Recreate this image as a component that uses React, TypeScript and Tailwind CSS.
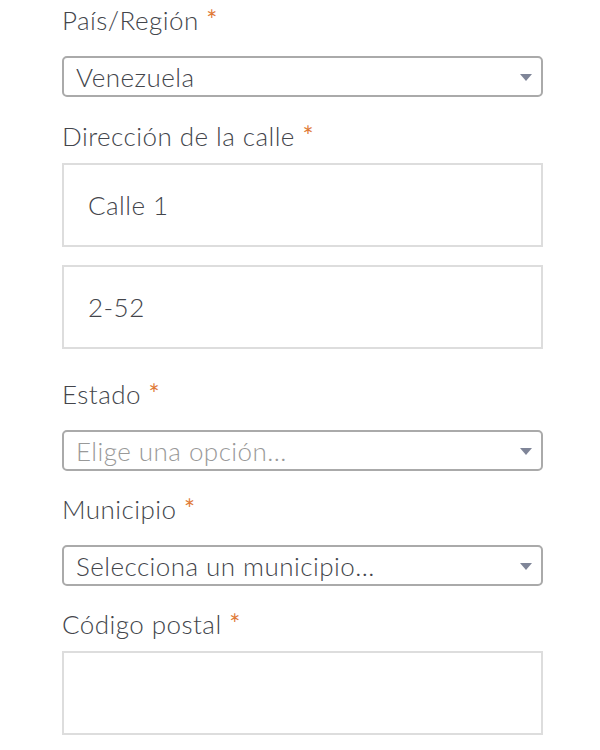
import React from "react";

const font = { fontFamily: "Lato, 'Noto Sans', sans-serif" };

function Label({ text, className = "" }: { text: string; className?: string }) {
  return (
    <div className={`text-[26px] font-light leading-[36px] tracking-[0.45px] text-[#43454b] ${className}`}>
      {text} <span className="font-normal text-[#e07a37]">*</span>
    </div>
  );
}

function Select({ value, placeholder = false, className = "" }: { value: string; placeholder?: boolean; className?: string }) {
  return (
    <div
      className={`flex h-[41px] w-[481px] items-center justify-between rounded-[5px] border-2 border-[#aaaaaa] bg-white pl-[12px] pr-[9px] ${className}`}
    >
      <span className={`text-[26px] font-light leading-[30px] tracking-[0.45px] ${placeholder ? "text-[#999999]" : "text-[#43454b]"}`}>{value}</span>
      <svg width="12" height="7" viewBox="0 0 12 7" className="mt-[2px]">
        <polygon points="0,0 12,0 6,7" fill="#7f8598" />
      </svg>
    </div>
  );
}

function Input({ value = "", className = "" }: { value?: string; className?: string }) {
  return (
    <div
      className={`flex h-[84px] w-[481px] items-center border-2 border-[#dddddd] bg-white pl-[24px] ${className}`}
    >
      <span className="text-[26px] font-light leading-[30px] tracking-[0.45px] text-[#43454b]">{value}</span>
    </div>
  );
}

export default function App() {
  return (
    <div style={font} className="h-[750px] w-[600px] overflow-hidden bg-white">
      <div className="ml-[62px] flex flex-col">
        <Label text="País/Región" className="mt-[2px]" />
        <Select value="Venezuela" className="mt-[18px]" />
        <Label text="Dirección de la calle" className="mt-[21px]" />
        <Input value="Calle 1" className="mt-[9px]" />
        <Input value="2-52" className="mt-[18px]" />
        <Label text="Estado" className="mt-[27px]" />
        <Select value="Elige una opción..." placeholder className="mt-[18px]" />
        <Label text="Municipio" className="mt-[20px]" />
        <Select value="Selecciona un municipio..." className="mt-[18px]" />
        <Label text="Código postal" className="mt-[20px]" />
        <Input className="mt-[9px]" />
      </div>
    </div>
  );
}
